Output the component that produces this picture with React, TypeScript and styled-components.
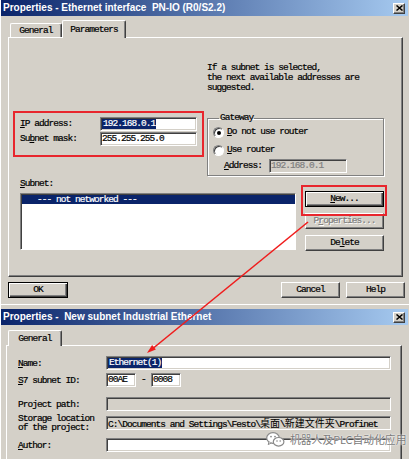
import React from "react";
import styled, { createGlobalStyle, css } from "styled-components";

// Estilos globais: fonte de sistema estilo "SimSun" aproximada com Liberation Mono
const GlobalStyle = createGlobalStyle`
  html, body {
    margin: 0;
    padding: 0;
    background: #d4d0c8;
  }
  body {
    font-family: "Liberation Mono", "Courier New", monospace;
    font-size: 9.5px;
    line-height: 10px;
    letter-spacing: -0.95px;
    color: #000;
    -webkit-text-stroke: 0.2px currentColor;
  }
  u {
    text-underline-offset: 1px;
  }
`;

const Screen = styled.div`
  position: relative;
  width: 409px;
  height: 459px;
  overflow: hidden;
  background: #d4d0c8;
`;

// Janela de dialogo classica
const Window = styled.div<{ $first?: boolean }>`
  box-sizing: border-box;
  width: 409px;
  height: ${(p) => (p.$first ? "304px" : "160px")};
  padding: ${(p) => (p.$first ? "0 1px" : "4px 1px 0")};
  border-top: ${(p) => (p.$first ? "none" : "1px solid #fff")};
  background: #d4d0c8;
  box-shadow: inset 1px 0 0 #fff;
  display: flex;
  flex-direction: column;
`;

const TitleBar = styled.div`
  flex: none;
  height: 16px;
  display: flex;
  align-items: center;
  justify-content: space-between;
  padding: 0 3px 0 2px;
  background: linear-gradient(to right, #0a246a, #a6caf0);
  color: #fff;
  font-family: "Liberation Sans", Arial, sans-serif;
  font-weight: bold;
  font-size: 10px;
  letter-spacing: 0;
  white-space: pre;
  -webkit-text-stroke: 0;
`;

const CloseButton = styled.span`
  box-sizing: border-box;
  width: 12px;
  height: 11px;
  display: flex;
  align-items: center;
  justify-content: center;
  background: #d4d0c8;
  border: 1px solid;
  border-color: #fff #404040 #404040 #fff;
  box-shadow: inset -1px -1px 0 #808080;
`;

const TabStrip = styled.div<{ $mt: number; $h: number; $pl: number }>`
  position: relative;
  z-index: 1;
  flex: none;
  display: flex;
  align-items: flex-end;
  margin-top: ${(p) => p.$mt}px;
  height: ${(p) => p.$h}px;
  padding-left: ${(p) => p.$pl}px;
`;

const Tab = styled.div<{ $w: number; $h: number; $active?: boolean }>`
  box-sizing: border-box;
  width: ${(p) => p.$w}px;
  height: ${(p) => p.$h}px;
  display: flex;
  align-items: center;
  justify-content: center;
  background: #d4d0c8;
  border-top: 1px solid #fff;
  border-left: 1px solid #fff;
  border-right: 1px solid #404040;
  border-radius: 2px 2px 0 0;
  box-shadow: inset -1px 0 0 #808080;
  ${(p) =>
    p.$active &&
    css`
      margin-bottom: -1px;
    `}
`;

const Panel = styled.div<{ $margin: string; $padding: string; $h?: number }>`
  box-sizing: border-box;
  height: ${(p) => (p.$h ? `${p.$h}px` : "auto")};
  flex: ${(p) => (p.$h ? "none" : "1")};
  margin: ${(p) => p.$margin};
  padding: ${(p) => p.$padding};
  border: 1px solid;
  border-color: #fff #404040 #404040 #fff;
  box-shadow: inset -1px -1px 0 #808080;
`;

// Parte superior do painel de parametros
const TopSection = styled.div`
  display: flex;
  height: 138px;
`;

const AddressColumn = styled.div`
  width: 187px;
  padding-top: 79px;
  display: flex;
  flex-direction: column;
  gap: 1px;
`;

const GatewayColumn = styled.div`
  width: 177px;
  padding-top: 25px;
`;

const Hint = styled.div`
  white-space: pre;
`;

const FieldRow = styled.div`
  display: flex;
  align-items: center;
  height: 14px;
`;

const Label = styled.span<{ $w: number }>`
  flex: none;
  width: ${(p) => p.$w}px;
  white-space: pre;
`;

const Field = styled.div<{ $w?: number; $tone?: "white" | "gray"; $muted?: boolean }>`
  box-sizing: border-box;
  flex: ${(p) => (p.$w ? "none" : "1")};
  width: ${(p) => (p.$w ? `${p.$w}px` : "auto")};
  height: 14px;
  padding: 1px 0 0 1px;
  background: ${(p) => (p.$tone === "gray" ? "#d4d0c8" : "#fff")};
  color: ${(p) => (p.$muted ? "#808080" : "#000")};
  border: 1px solid;
  border-color: #808080 #fff #fff #808080;
  box-shadow: inset 1px 1px 0 #404040, inset -1px -1px 0 #d4d0c8;
  white-space: pre;
  overflow: hidden;
`;

const Selected = styled.span`
  display: inline-block;
  padding: 0 1px;
  line-height: 10px;
  background: #0a246a;
  color: #fff;
`;

const GroupBox = styled.fieldset`
  box-sizing: border-box;
  margin: 20px 0 0;
  padding: 0 0 2px 5px;
  min-width: 0;
  border: 1px solid #808080;
  box-shadow: 1px 1px 0 #fff, inset 1px 1px 0 #fff;
`;

const Legend = styled.legend`
  margin-left: 6px;
  padding: 0 1px;
  line-height: 10px;
`;

const RadioRow = styled.div`
  display: flex;
  align-items: center;
  gap: 3px;
  height: 18px;
`;

const Radio = styled.span<{ $checked?: boolean }>`
  position: relative;
  box-sizing: border-box;
  width: 11px;
  height: 11px;
  border-radius: 50%;
  background: #fff;
  border: 1px solid;
  border-color: #808080 #fff #fff #808080;
  box-shadow: inset 1px 1px 0 #404040;
  ${(p) =>
    p.$checked &&
    css`
      &::after {
        content: "";
        position: absolute;
        left: 3px;
        top: 3px;
        width: 4px;
        height: 4px;
        border-radius: 50%;
        background: #000;
      }
    `}
`;

const AddressRow = styled(FieldRow)`
  padding-left: 11px;
`;

// Parte inferior: lista de subredes e botoes
const SubnetSection = styled.div`
  display: flex;
  gap: 9px;
  margin-top: 3px;
`;

const ListColumn = styled.div`
  width: 276px;
`;

const Caption = styled.div`
  height: 10px;
  margin-bottom: 4px;
`;

const ListBox = styled.div`
  box-sizing: border-box;
  height: 57px;
  padding: 1px 0 0 1px;
  background: #fff;
  border: 1px solid;
  border-color: #808080 #fff #fff #808080;
  box-shadow: inset 1px 1px 0 #404040;
`;

const ListItem = styled.div<{ $selected?: boolean }>`
  height: 9px;
  line-height: 9px;
  padding-left: 15px;
  white-space: pre;
  background: ${(p) => (p.$selected ? "#0a246a" : "transparent")};
  color: ${(p) => (p.$selected ? "#fff" : "#000")};
`;

const ButtonColumn = styled.div`
  width: 79px;
  padding-top: 12px;
  display: flex;
  flex-direction: column;
  gap: 6px;
`;

const Button = styled.div<{ $w?: number; $default?: boolean; $disabled?: boolean }>`
  box-sizing: border-box;
  width: ${(p) => (p.$w ? `${p.$w}px` : "100%")};
  height: 16px;
  display: flex;
  align-items: center;
  justify-content: center;
  background: #d4d0c8;
  white-space: pre;
  border: 1px solid;
  border-color: #fff #404040 #404040 #fff;
  box-shadow: inset -1px -1px 0 #808080;
  ${(p) =>
    p.$default &&
    css`
      border-color: #000;
      box-shadow: inset 1px 1px 0 #fff, inset -1px -1px 0 #404040,
        inset -2px -2px 0 #808080;
    `}
  ${(p) =>
    p.$disabled &&
    css`
      color: #808080;
      text-shadow: 1px 1px 0 #fff;
    `}
`;

const ButtonBar = styled.div`
  display: flex;
  margin-top: 5px;
  padding: 0 3px 0 7px;
`;

const ButtonGroup = styled.div`
  margin-left: auto;
  display: flex;
  gap: 6px;
`;

// Formulario da segunda janela
const FormRow = styled.div<{ $mt?: number; $h?: number }>`
  display: flex;
  align-items: center;
  margin-top: ${(p) => p.$mt ?? 0}px;
  height: ${(p) => p.$h ?? 14}px;
`;

const FormLabel = styled.div`
  flex: none;
  width: 88px;
  line-height: 9px;
  white-space: pre;
`;

const Dash = styled.span`
  width: 15px;
  text-align: center;
`;

const Cjk = styled.span`
  font-family: "Noto Sans CJK SC", sans-serif;
  font-size: 10px;
  letter-spacing: 0;
  -webkit-text-stroke: 0;
`;

// Anotacoes sobrepostas (caixas vermelhas, seta e marca d'agua)
const RedBox = styled.div<{ $x: number; $y: number; $w: number; $h: number }>`
  position: absolute;
  left: ${(p) => p.$x}px;
  top: ${(p) => p.$y}px;
  width: ${(p) => p.$w}px;
  height: ${(p) => p.$h}px;
  box-sizing: border-box;
  border: 2px solid #e8262d;
  pointer-events: none;
`;

const Overlay = styled.svg`
  position: absolute;
  left: 0;
  top: 0;
  pointer-events: none;
`;

const Watermark = styled.div`
  position: absolute;
  left: 266px;
  top: 432px;
  display: flex;
  align-items: center;
  gap: 5px;
  font-family: "Noto Sans CJK SC", sans-serif;
  font-size: 10.8px;
  line-height: 15px;
  letter-spacing: 0;
  color: #7a7a7a;
  -webkit-text-stroke: 0;
  text-shadow: 0 0 2px #fff, 0 0 1px #fff;
`;

const CloseIcon = () => (
  <CloseButton>
    <svg width="7" height="6" viewBox="0 0 7 6">
      <path d="M0.5 0.5 L6.5 5.5 M6.5 0.5 L0.5 5.5" stroke="#000" strokeWidth="1.5" />
    </svg>
  </CloseButton>
);

const WeChatLogo = () => (
  <svg width="19" height="15" viewBox="0 0 19 15">
    <ellipse cx="7" cy="6" rx="6.3" ry="5.3" fill="#fff" stroke="#8a8a8a" strokeWidth="1.2" />
    <path d="M3 10 L2.2 12.6 L5.2 11" fill="#fff" stroke="#8a8a8a" strokeWidth="1" />
    <circle cx="5" cy="4.6" r="0.9" fill="#8a8a8a" />
    <circle cx="9" cy="4.6" r="0.9" fill="#8a8a8a" />
    <ellipse cx="12.6" cy="9.8" rx="5.3" ry="4.3" fill="#fff" stroke="#8a8a8a" strokeWidth="1.2" />
    <circle cx="11" cy="9" r="0.8" fill="#8a8a8a" />
    <circle cx="14.2" cy="9" r="0.8" fill="#8a8a8a" />
  </svg>
);

export default function App() {
  return (
    <Screen>
      <GlobalStyle />

      <Window $first>
        <TitleBar>
          <span>Properties - Ethernet interface  PN-IO (R0/S2.2)</span>
          <CloseIcon />
        </TitleBar>
        <TabStrip $mt={4} $h={17} $pl={9}>
          <Tab $w={52} $h={14}>General</Tab>
          <Tab $w={64} $h={18} $active>
            Parameters
          </Tab>
        </TabStrip>
        <Panel $margin="0 5px 0 7px" $padding="0 18px 0 11px" $h={240}>
          <TopSection>
            <AddressColumn>
              <FieldRow>
                <Label $w={80}>
                  <u>I</u>P address:
                </Label>
                <Field $w={97}>
                  <Selected>192.168.0.1</Selected>
                </Field>
              </FieldRow>
              <FieldRow>
                <Label $w={80}>
                  Su<u>b</u>net mask:
                </Label>
                <Field $w={97}>255.255.255.0</Field>
              </FieldRow>
            </AddressColumn>
            <GatewayColumn>
              <Hint>
                {"If a subnet is selected,\nthe next available addresses are\nsuggested."}
              </Hint>
              <GroupBox>
                <Legend>Gateway</Legend>
                <RadioRow>
                  <Radio $checked />
                  <span>
                    <u>D</u>o not use router
                  </span>
                </RadioRow>
                <RadioRow>
                  <Radio />
                  <span>
                    <u>U</u>se router
                  </span>
                </RadioRow>
                <AddressRow>
                  <Label $w={45}>
                    <u>A</u>ddress:
                  </Label>
                  <Field $w={78} $tone="gray" $muted>
                    192.168.0.1
                  </Field>
                </AddressRow>
              </GroupBox>
            </GatewayColumn>
          </TopSection>
          <SubnetSection>
            <ListColumn>
              <Caption>
                <u>S</u>ubnet:
              </Caption>
              <ListBox>
                <ListItem $selected>--- not networked ---</ListItem>
              </ListBox>
            </ListColumn>
            <ButtonColumn>
              <Button $default>
                <span>
                  <u>N</u>ew...
                </span>
              </Button>
              <Button $disabled>
                <span>
                  P<u>r</u>operties...
                </span>
              </Button>
              <Button>
                <span>
                  De<u>l</u>ete
                </span>
              </Button>
            </ButtonColumn>
          </SubnetSection>
        </Panel>
        <ButtonBar>
          <Button $w={60} $default>
            OK
          </Button>
          <ButtonGroup>
            <Button $w={59}>Cancel</Button>
            <Button $w={59}>Help</Button>
          </ButtonGroup>
        </ButtonBar>
      </Window>

      <Window>
        <TitleBar>
          <span>Properties -  New subnet Industrial Ethernet</span>
          <CloseIcon />
        </TitleBar>
        <TabStrip $mt={5} $h={15} $pl={7}>
          <Tab $w={54} $h={16} $active>
            General
          </Tab>
        </TabStrip>
        <Panel $margin="0 6px 0 5px" $padding="10px 10px 0 11px">
          <FormRow>
            <FormLabel>
              <u>N</u>ame:
            </FormLabel>
            <Field>
              <Selected>Ethernet(1)</Selected>
            </Field>
          </FormRow>
          <FormRow $mt={3}>
            <FormLabel>
              <u>S</u>7 subnet ID:
            </FormLabel>
            <Field $w={30}>00AE</Field>
            <Dash>-</Dash>
            <Field $w={30}>0008</Field>
          </FormRow>
          <FormRow $mt={10}>
            <FormLabel>Project path:</FormLabel>
            <Field $tone="gray" />
          </FormRow>
          <FormRow $mt={2} $h={20}>
            <FormLabel>{"Storage location\nof the project:"}</FormLabel>
            <Field $tone="gray">
              {"C:\\Documents and Settings\\Festo\\"}
              <Cjk>桌面</Cjk>
              {"\\"}
              <Cjk>新建文件夹</Cjk>
              {"\\Profinet"}
            </Field>
          </FormRow>
          <FormRow $mt={5}>
            <FormLabel>
              <u>A</u>uthor:
            </FormLabel>
            <Field />
          </FormRow>
        </Panel>
      </Window>

      <RedBox $x={13} $y={111} $w={191} $h={46} />
      <RedBox $x={301} $y={185} $w={86} $h={31} />

      <Overlay width="409" height="459" viewBox="0 0 409 459">
        <line x1="308" y1="222" x2="151" y2="350" stroke="#f01c1c" strokeWidth="1.6" />
        <polygon points="147,353 155.9,349.6 152.1,345" fill="#f01c1c" />
      </Overlay>

      <Watermark>
        <WeChatLogo />
        <span>机器人及PLC自动化应用</span>
      </Watermark>
    </Screen>
  );
}
